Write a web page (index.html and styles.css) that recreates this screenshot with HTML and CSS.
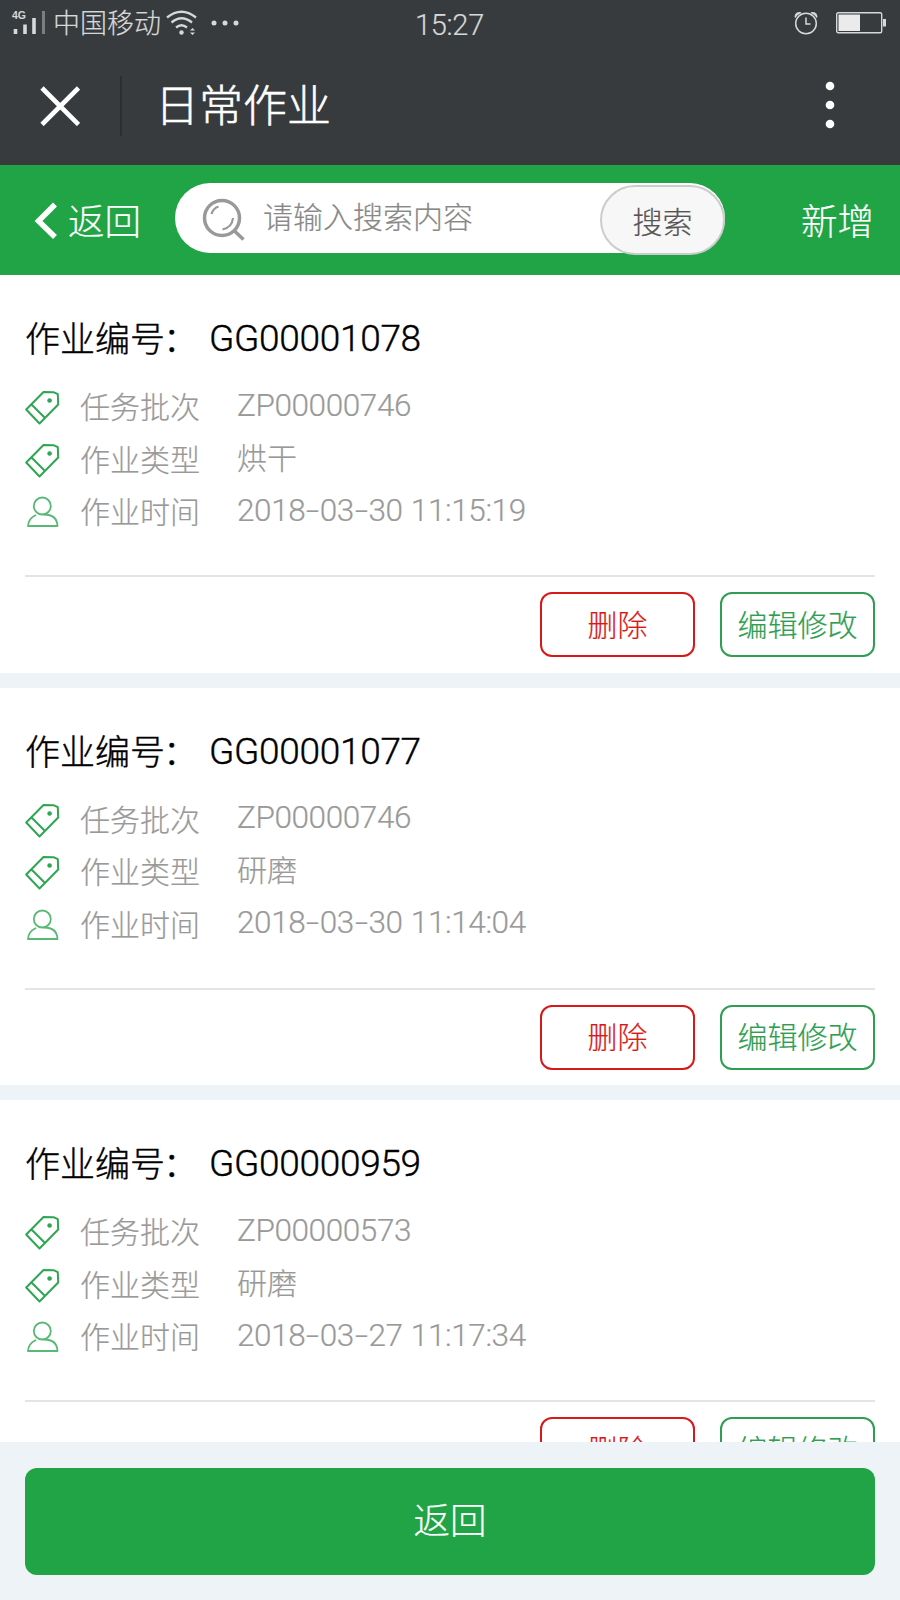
FILE: index.html
```html
<!DOCTYPE html>
<html lang="zh-CN">
<head>
  <meta charset="UTF-8">
  <title>日常作业</title>
  <link rel="stylesheet" href="styles.css">
</head>
<body>
  <!-- 图标 -->
  <svg class="symbols">
    <symbol id="tag" viewBox="0 0 36 36">
      <path d="M1.200 19.500L18.500 2L28.500 2.200L32.800 4.200L33.200 14.500L14.500 33.500ZM6.500 14.500L20 28" fill="none" stroke="currentColor" stroke-width="2" stroke-linejoin="round"/>
      <circle cx="24.600" cy="10.500" r="2.300" fill="currentColor"/>
    </symbol>
    <symbol id="user" viewBox="0 0 36 36">
      <circle cx="17.300" cy="11" r="8.500" fill="none" stroke="currentColor" stroke-width="1.800"/>
      <path d="M10.500 20.300Q3.500 23.500 3 31H32.500Q32 19.500 19 19.500" fill="none" stroke="currentColor" stroke-width="1.800" stroke-linejoin="round" stroke-linecap="round"/>
    </symbol>
  </svg>

  <div class="status">
    <svg class="signal" width="36" height="28" viewBox="0 0 36 28">
      <text x="0" y="9" class="net">4G</text>
      <path d="M3.500 24V19M13 24V14.500M22 24V8" stroke="#d6d8d9" stroke-width="3.600"/>
      <path d="M31.500 24V1" stroke="#7b7d7f" stroke-width="3"/>
    </svg>
    <span class="carrier">中国移动</span>
    <svg class="wifi" width="32" height="26" viewBox="0 0 32 26">
      <path d="M1 7.500Q15.500 -4 30 7.500M5.500 12.500Q15.500 4 26 12.500M10 17.500Q15.500 13 21 17.500" fill="none" stroke="#d6d8d9" stroke-width="2.300"/>
      <circle cx="15.500" cy="22.500" r="2.200" fill="#d6d8d9"/>
      <path d="M24 20.500L26.500 18L29 20.500ZM24 22.500L26.500 25L29 22.500Z" fill="#d6d8d9"/>
    </svg>
    <svg class="more" width="28" height="6" viewBox="0 0 28 6">
      <g fill="#d6d8d9"><circle cx="3" cy="3" r="2.500"/><circle cx="14" cy="3" r="2.500"/><circle cx="25" cy="3" r="2.500"/></g>
    </svg>
    <span class="clock">15:27</span>
    <svg class="alarm" width="24" height="24" viewBox="0 0 24 24">
      <circle cx="12" cy="12.500" r="10.300" fill="none" stroke="#d6d8d9" stroke-width="1.500"/>
      <path d="M12 6.500V13H16.500" fill="none" stroke="#d6d8d9" stroke-width="1.500"/>
      <path d="M.5 6Q1 .5 6.500 1L7.500 2Q3 3.500 1.500 7ZM23.500 6Q23 .5 17.500 1L16.500 2Q21 3.500 22.500 7Z" fill="#d6d8d9"/>
    </svg>
    <svg class="battery" width="50" height="22" viewBox="0 0 50 22">
      <rect x=".7" y=".7" width="45" height="20" rx="1.500" fill="none" stroke="#d6d8d9" stroke-width="1.400"/>
      <rect x="2.500" y="2.500" width="21.500" height="16.500" fill="#ebebec"/>
      <rect x="47" y="7" width="3" height="7.500" fill="#d6d8d9"/>
    </svg>
  </div>

  <div class="titlebar">
    <svg class="close" width="40" height="40" viewBox="0 0 40 40">
      <path d="M2 2L38.500 38.500M38.500 2L2 38.500" stroke="#fff" stroke-width="4.600"/>
    </svg>
    <div class="split"></div>
    <h1>日常作业</h1>
    <svg class="menu" width="10" height="48" viewBox="0 0 10 48">
      <g fill="#fff"><circle cx="5" cy="5" r="4.300"/><circle cx="5" cy="24" r="4.300"/><circle cx="5" cy="43" r="4.300"/></g>
    </svg>
  </div>

  <div class="toolbar">
    <a class="back">
      <svg width="24" height="38" viewBox="0 0 24 38">
        <path d="M21 3.500L4.500 20L21 36" fill="none" stroke="#fff" stroke-width="5.500"/>
      </svg>
      <span>返回</span>
    </a>
    <div class="search">
      <svg class="search-icon" width="44" height="44" viewBox="0 0 44 44" fill="none" stroke="#999">
        <circle cx="21" cy="20" r="17.500" stroke-width="3.500"/>
        <path d="M33 32.500L42.500 41.500" stroke-width="3.500"/>
        <path d="M10.500 16Q12 10.500 17.500 8.500M32 20Q31 29.500 21.500 31.500" stroke-width="2.200"/>
      </svg>
      <span class="placeholder">请输入搜索内容</span>
      <button class="search-btn">搜索</button>
    </div>
    <a class="add">新增</a>
  </div>

  <div class="list">
    <div class="card">
      <h2>作业编号<span class="colon">：</span><span class="code">GG00001078</span></h2>
      <div class="row"><svg class="icon"><use href="#tag"/></svg><span class="label">任务批次</span><span class="value">ZP00000746</span></div>
      <div class="row"><svg class="icon"><use href="#tag"/></svg><span class="label">作业类型</span><span class="value kind">烘干</span></div>
      <div class="row"><svg class="icon user"><use href="#user"/></svg><span class="label">作业时间</span><span class="value">2018<i>-</i>03<i>-</i>30 11:15:19</span></div>
      <div class="actions"><button class="btn del">删除</button><button class="btn edit">编辑修改</button></div>
    </div>

    <div class="card">
      <h2>作业编号<span class="colon">：</span><span class="code">GG00001077</span></h2>
      <div class="row"><svg class="icon"><use href="#tag"/></svg><span class="label">任务批次</span><span class="value">ZP00000746</span></div>
      <div class="row"><svg class="icon"><use href="#tag"/></svg><span class="label">作业类型</span><span class="value kind">研磨</span></div>
      <div class="row"><svg class="icon user"><use href="#user"/></svg><span class="label">作业时间</span><span class="value">2018<i>-</i>03<i>-</i>30 11:14:04</span></div>
      <div class="actions"><button class="btn del">删除</button><button class="btn edit">编辑修改</button></div>
    </div>

    <div class="card">
      <h2>作业编号<span class="colon">：</span><span class="code">GG00000959</span></h2>
      <div class="row"><svg class="icon"><use href="#tag"/></svg><span class="label">任务批次</span><span class="value">ZP00000573</span></div>
      <div class="row"><svg class="icon"><use href="#tag"/></svg><span class="label">作业类型</span><span class="value kind">研磨</span></div>
      <div class="row"><svg class="icon user"><use href="#user"/></svg><span class="label">作业时间</span><span class="value">2018<i>-</i>03<i>-</i>27 11:17:34</span></div>
      <div class="actions"><button class="btn del">删除</button><button class="btn edit">编辑修改</button></div>
    </div>
  </div>

  <div class="footer">
    <button class="footer-btn">返回</button>
  </div>
</body>
</html>
```

FILE: styles.css
```css
* {
  box-sizing: border-box;
}
body {
  margin: 0;
  width: 900px;
  height: 1600px;
  display: flex;
  flex-direction: column;
  overflow: hidden;
  background: #edf3f6;
  font-family: Roboto, "Noto Sans CJK SC", sans-serif;
  font-weight: 300;
  -webkit-text-stroke: 0.2px;
}
button {
  font: inherit;
  padding: 0;
}
svg {
  display: block;
  flex: none;
}
.symbols {
  display: none;
}

/* 状态栏 */
.status {
  display: flex;
  align-items: center;
  height: 46px;
  padding: 0 14px 0 12px;
  background: #383b3e;
  color: #d6d8d9;
}
.signal {
  margin-top: 1px;
  overflow: visible;
}
.net {
  font: bold 10.500px "Liberation Sans", sans-serif;
  fill: #d6d8d9;
}
.carrier {
  margin: 2px 0 0 5px;
  font-size: 27px;
  line-height: 46px;
}
.wifi {
  margin-left: 5px;
}
.more {
  margin-left: 13px;
}
.clock {
  margin: 3px 0 0 176px;
  font-size: 29px;
  line-height: 46px;
  letter-spacing: -0.3px;
}
.alarm {
  margin-left: auto;
}
.battery {
  margin-left: 18px;
}

/* 标题栏 */
.titlebar {
  display: flex;
  align-items: center;
  height: 119px;
  padding: 0 65px 0 40px;
  background: #383b3e;
  color: #fff;
}
.split {
  width: 2px;
  height: 60px;
  margin: 0 33px 0 40px;
  background: #2c2e30;
}
.titlebar h1 {
  margin: 2px 0 0;
  font-size: 44px;
  line-height: 60px;
  font-weight: 300;
  -webkit-text-stroke: 0.5px;
}
.menu {
  margin-left: auto;
  margin-bottom: 1px;
}

/* 搜索栏 */
.toolbar {
  display: flex;
  align-items: center;
  height: 110px;
  padding: 0 26px 0 34px;
  background: #20a446;
  color: #fff;
  font-size: 36.5px;
}
.back {
  display: flex;
  align-items: center;
  gap: 10px;
  width: 141px;
}
.back span,
.add {
  padding-bottom: 2px;
}
.search {
  display: flex;
  align-items: center;
  width: 550px;
  height: 70px;
  margin-bottom: 5px;
  padding-left: 26px;
  border-radius: 35px;
  background: #fff;
}
.search-icon {
  margin-top: 5px;
}
.placeholder {
  margin-left: 18px;
  padding-bottom: 5px;
  font-size: 30px;
  color: #888;
}
.search-btn {
  width: 125px;
  height: 70px;
  margin: 4px 0 0 auto;
  border: 2px solid #ccc;
  border-radius: 35px;
  background: #f7f7f7;
  color: #555;
  font-size: 30px;
}
.add {
  margin-left: auto;
}

/* 列表 */
.list {
  height: 1167px;
  overflow: hidden;
}
.card {
  height: 397.5px;
  margin-bottom: 15px;
  padding: 42px 25px 0;
  background: #fff;
}
.card h2 {
  display: flex;
  margin: 0 0 18px;
  height: 47px;
  font-size: 35px;
  line-height: 47px;
  font-weight: 300;
  color: #000;
  -webkit-text-stroke: 0.4px;
}
.colon {
  margin-left: -2px;
}
.code {
  margin-left: 11px;
  font-size: 37px;
  line-height: 44px;
  letter-spacing: -0.3px;
}
.row {
  display: flex;
  align-items: center;
  height: 52.5px;
  font-size: 30px;
  line-height: 52.5px;
  color: #999;
}
.icon {
  width: 36px;
  height: 36px;
  color: #2fa652;
}
.icon.user {
  color: #58b976;
}
.label {
  width: 157px;
  margin-left: 19px;
}
.value {
  margin-bottom: 5px;
  font-size: 31.5px;
  letter-spacing: -0.4px;
  word-spacing: 1px;
}
.value.kind {
  margin-bottom: 4px;
  font-size: 30px;
  letter-spacing: 0;
}
.value i {
  display: inline-block;
  font-style: normal;
  transform: scaleX(1.5);
  width: 14.5px;
  text-align: center;
}
.actions {
  display: flex;
  justify-content: flex-end;
  gap: 25px;
  margin-top: 35.5px;
  padding-top: 15px;
  border-top: 2px solid #e2e4e6;
}
.btn {
  width: 155px;
  height: 65px;
  padding-bottom: 4px;
  border: 2px solid;
  border-radius: 12px;
  background: #fff;
  font-size: 30px;
}
.del {
  border-color: #d91818;
  color: #d91818;
}
.edit {
  border-color: #2f9e52;
  color: #2f9e52;
}

/* 底部 */
.footer {
  flex: 1;
  padding: 25.5px 25px 0;
}
.footer-btn {
  display: block;
  width: 850px;
  height: 107.5px;
  padding-bottom: 6px;
  border: 0;
  border-radius: 12px;
  background: #20a446;
  color: #fff;
  font-size: 36.5px;
}
```
